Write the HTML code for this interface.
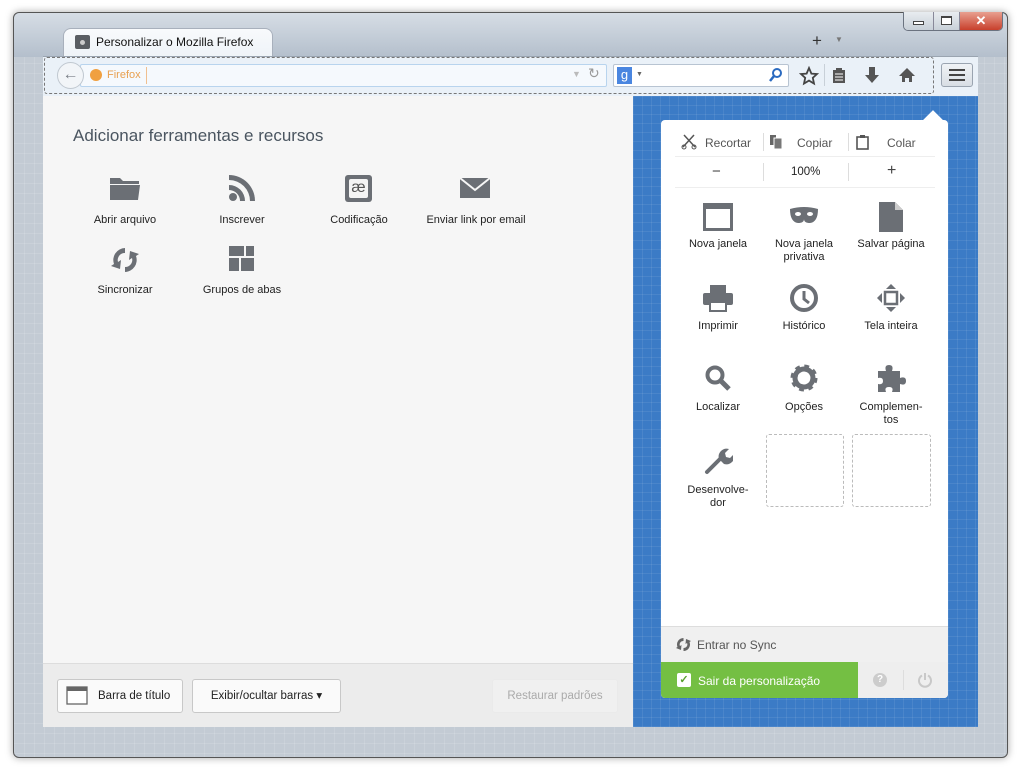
<!DOCTYPE html>
<html><head><meta charset="utf-8"><style>
*{box-sizing:border-box;margin:0;padding:0}
body{width:1024px;height:768px;background:#fff;position:relative;overflow:hidden;font-family:"Liberation Sans",sans-serif;font-size:11px;color:#222}
.a{position:absolute}
.frame{left:13px;top:12px;width:995px;height:746px;border:1px solid #555;border-radius:6px;background:#c3cbd4;box-shadow:0 0 8px rgba(0,0,0,.35);
background-image:linear-gradient(rgba(255,255,255,.12) 1px,transparent 1px),linear-gradient(90deg,rgba(255,255,255,.12) 1px,transparent 1px);background-size:10px 10px}
.top{left:14px;top:13px;width:993px;height:44px;background:linear-gradient(#d6dde5,#b4bfcc);border-radius:6px 6px 0 0}
.lbl{text-align:center;width:110px;font-size:11px;color:#222;line-height:13px}
.ic{fill:#6b6f75}
.blue{left:633px;top:96px;width:345px;height:631px;background:#3b7bc6;background-image:linear-gradient(rgba(255,255,255,.08) 1px,transparent 1px),linear-gradient(90deg,rgba(255,255,255,.08) 1px,transparent 1px);background-size:9px 9px}
.btn{background:#fafafa;border:1px solid #c8c8c8;border-radius:3px;height:34px;top:679px;font-size:11.5px;line-height:32px;text-align:center}
</style></head><body>
<div class="a frame"></div>
<div class="a top"></div>
<!-- window buttons -->
<div class="a" style="left:903px;top:12px;width:100px;height:19px;border:1px solid #6b7380;border-top:none;border-radius:0 0 5px 5px;overflow:hidden;display:flex">
<div style="width:30px;background:linear-gradient(#e8ecf0,#c8d0d8);border-right:1px solid #889"><div style="margin:9px auto 0;width:11px;height:4px;border:1px solid #444;background:#fff"></div></div>
<div style="width:26px;background:linear-gradient(#e8ecf0,#c8d0d8);border-right:1px solid #889"><div style="margin:4px auto 0;width:11px;height:9px;border:1px solid #444;border-top-width:2px;background:#fff"></div></div>
<div style="flex:1;background:linear-gradient(#e8a090,#c8402c);color:#fff;text-align:center;font-weight:bold;font-size:13px;line-height:18px">✕</div>
</div>
<!-- tab -->
<div class="a" style="left:63px;top:28px;width:210px;height:30px;background:linear-gradient(#f8fafc,#eef3f8);border:1px solid #a8b0bc;border-bottom:none;border-radius:8px 8px 0 0"></div>
<div class="a" style="left:75px;top:35px;width:15px;height:14px;background:#5a5e63;border-radius:2px"><div style="margin:5px auto 0;width:5px;height:5px;border-radius:50%;background:#ccc"></div></div>
<div class="a" style="left:96px;top:35px;font-size:12px;color:#111">Personalizar o Mozilla Firefox</div>
<div class="a" style="left:812px;top:31px;font-size:17px;color:#333">+</div>
<div class="a" style="left:835px;top:35px;font-size:8px;color:#777">▼</div>
<!-- toolbar -->
<div class="a" style="left:43px;top:56px;width:935px;height:40px;background:#eaf1f8;border-top:1px solid #9aa4b0"></div>
<div class="a" style="left:44px;top:57px;width:890px;height:37px;border:1px dashed #777;border-radius:3px"></div>
<div class="a" style="left:80px;top:64px;width:527px;height:23px;background:#f5f9fd;border:1px solid #b8d4ee;border-radius:2px"></div>
<div class="a" style="left:57px;top:62px;width:27px;height:27px;border-radius:50%;background:#f2f5f8;border:1px solid #c0c8d0;color:#7b8088;font-size:16px;text-align:center;line-height:24px;font-weight:bold">←</div>
<div class="a" style="left:90px;top:69px;width:12px;height:12px;border-radius:50%;background:#f0a040"></div>
<div class="a" style="left:107px;top:69px;color:#e8a050;font-size:11px">Firefox</div>
<div class="a" style="left:146px;top:67px;width:1px;height:17px;background:#f0c090"></div>
<div class="a" style="left:572px;top:69px;color:#bbb;font-size:9px">▼</div>
<div class="a" style="left:588px;top:65px;color:#999;font-size:14px">↻</div>
<div class="a" style="left:613px;top:64px;width:176px;height:23px;background:#fff;border:1px solid #b8c4d2;border-radius:2px"></div>
<div class="a" style="left:617px;top:67px;width:15px;height:17px;background:#4a86e0;color:#fff;text-align:center;font-size:13px;line-height:16px">g</div>
<div class="a" style="left:636px;top:71px;font-size:7px;color:#666">▼</div>
<svg class="a" style="left:768px;top:67px" width="16" height="16"><circle cx="9" cy="6" r="4" fill="none" stroke="#2a6ac0" stroke-width="2"/><line x1="6" y1="9" x2="2" y2="14" stroke="#2a6ac0" stroke-width="2.5"/></svg>
<svg class="a" style="left:799px;top:66px" width="20" height="20"><polygon points="10,2 12.4,7.6 18,8 13.8,11.8 15,17.6 10,14.6 5,17.6 6.2,11.8 2,8 7.6,7.6" fill="none" stroke="#444" stroke-width="1.8"/></svg>
<div class="a" style="left:824px;top:64px;width:1px;height:22px;background:#c8d0d8"></div>
<svg class="a" style="left:830px;top:66px" width="18" height="18"><rect x="3" y="4" width="12" height="13" fill="#555"/><rect x="6" y="2" width="6" height="3" fill="#555"/><g stroke="#fff"><line x1="5" y1="8" x2="13" y2="8"/><line x1="5" y1="11" x2="13" y2="11"/><line x1="5" y1="14" x2="13" y2="14"/></g></svg>
<svg class="a" style="left:863px;top:66px" width="18" height="18"><rect x="6" y="1" width="6" height="8" fill="#555"/><polygon points="2,9 16,9 9,17" fill="#555"/></svg>
<svg class="a" style="left:898px;top:66px" width="18" height="18"><polygon points="9,2 17,10 14,10 14,16 11,16 11,12 7,12 7,16 4,16 4,10 1,10" fill="#555"/></svg>
<div class="a" style="left:941px;top:63px;width:32px;height:24px;border:1px solid #9aa4b0;border-radius:3px;background:linear-gradient(#f0f3f6,#d8dee4)"><div style="margin:5px auto 0;width:16px;height:12px;border-top:2.5px solid #444;border-bottom:2.5px solid #444;position:relative"><div style="position:absolute;top:2.5px;left:0;width:16px;height:2.5px;background:#444"></div></div></div>
<!-- left content -->
<div class="a" style="left:43px;top:96px;width:590px;height:567px;background:#f6f6f6"></div>
<div class="a" style="left:43px;top:663px;width:590px;height:64px;background:#ececec;border-top:1px solid #ddd"></div>
<div class="a" style="left:73px;top:126px;font-size:17px;color:#4a5560">Adicionar ferramentas e recursos</div>
<svg class="a" style="left:108px;top:174px" width="34" height="28"><path d="M2 4h10l3 3h16v3H2z M2 11h30l-2 15H2z" class="ic"/></svg>
<div class="a lbl" style="left:70px;top:214px">Abrir arquivo</div>
<svg class="a" style="left:227px;top:173px" width="30" height="30"><circle cx="6" cy="24" r="4" class="ic"/><path d="M2 12a16 16 0 0 1 16 16h-5a11 11 0 0 0-11-11z M2 2a26 26 0 0 1 26 26h-5A21 21 0 0 0 2 7z" class="ic"/></svg>
<div class="a lbl" style="left:187px;top:214px">Inscrever</div>
<div class="a" style="left:345px;top:175px;width:27px;height:27px;background:#6b6f75;border-radius:3px"><div style="margin:4px;width:19px;height:19px;background:#f4f4f4;border-radius:2px;text-align:center;font-size:16px;line-height:17px;color:#555">æ</div></div>
<div class="a lbl" style="left:304px;top:214px">Codificação</div>
<svg class="a" style="left:459px;top:177px" width="32" height="22"><rect x="1" y="1" width="30" height="20" class="ic"/><path d="M1 1l15 12L31 1" stroke="#f6f6f6" stroke-width="2" fill="none"/></svg>
<div class="a lbl" style="left:420px;top:214px;width:112px">Enviar link por email</div>
<svg class="a" style="left:110px;top:245px" width="30" height="30"><path d="M15 3a12 12 0 0 0-11 16l-3 2 9 3 1-9-3 2a7 7 0 0 1 7-9z M15 27a12 12 0 0 0 11-16l3-2-9-3-1 9 3-2a7 7 0 0 1-7 9z" class="ic"/></svg>
<div class="a lbl" style="left:70px;top:284px">Sincronizar</div>
<svg class="a" style="left:229px;top:246px" width="26" height="26"><rect x="0" y="0" width="15" height="10" class="ic"/><rect x="17" y="0" width="8" height="10" class="ic"/><rect x="0" y="12" width="10" height="13" class="ic"/><rect x="12" y="12" width="13" height="13" class="ic"/></svg>
<div class="a lbl" style="left:187px;top:284px">Grupos de abas</div>
<!-- bottom buttons -->
<div class="a btn" style="left:57px;width:126px;padding-left:28px;text-align:left;padding-left:40px">Barra de título</div>
<svg class="a" style="left:66px;top:686px" width="22" height="19"><rect x="1" y="1" width="20" height="17" fill="#fff" stroke="#666" stroke-width="1.3"/><rect x="1" y="1" width="20" height="4" fill="#666"/></svg>
<div class="a btn" style="left:192px;width:149px">Exibir/ocultar barras ▾</div>
<div class="a btn" style="left:492px;width:126px;background:#f0f0f0;border-color:#eaeaea;color:#aaa">Restaurar padrões</div>
<!-- blue area -->
<div class="a blue"></div>
<div class="a" style="left:661px;top:120px;width:287px;height:578px;background:#fff;border-radius:4px"></div>
<div class="a" style="left:926px;top:113px;width:14px;height:14px;background:#fff;transform:rotate(45deg)"></div>
<!-- edit row -->
<svg class="a" style="left:681px;top:134px" width="16" height="16"><path d="M3 1l11 12M13 1L2 13" stroke="#555" stroke-width="1.5"/><circle cx="3" cy="13" r="2" fill="none" stroke="#555"/><circle cx="13" cy="13" r="2" fill="none" stroke="#555"/></svg>
<div class="a" style="left:705px;top:136px;color:#555;font-size:12px">Recortar</div>
<div class="a" style="left:763px;top:133px;width:1px;height:18px;background:#ddd"></div>
<svg class="a" style="left:769px;top:134px" width="16" height="16"><rect x="1" y="1" width="6" height="10" fill="#666"/><rect x="5" y="4" width="8" height="11" fill="#777" stroke="#fff"/></svg>
<div class="a" style="left:797px;top:136px;color:#555;font-size:12px">Copiar</div>
<div class="a" style="left:848px;top:133px;width:1px;height:18px;background:#ddd"></div>
<svg class="a" style="left:856px;top:134px" width="14" height="16"><rect x="1" y="3" width="11" height="12" fill="none" stroke="#555" stroke-width="1.6"/><rect x="4" y="1" width="5" height="3" fill="#555"/></svg>
<div class="a" style="left:887px;top:136px;color:#555;font-size:12px">Colar</div>
<div class="a" style="left:675px;top:156px;width:260px;height:1px;background:#eee"></div>
<div class="a" style="left:712px;top:163px;font-size:15px;color:#444">−</div>
<div class="a" style="left:763px;top:163px;width:1px;height:18px;background:#ddd"></div>
<div class="a" style="left:791px;top:166px;font-size:11.5px;color:#222">100%</div>
<div class="a" style="left:848px;top:163px;width:1px;height:18px;background:#ddd"></div>
<div class="a" style="left:887px;top:162px;font-size:16px;color:#444">+</div>
<div class="a" style="left:675px;top:187px;width:260px;height:1px;background:#eee"></div>
<!-- grid -->
<svg class="a" style="left:703px;top:203px" width="30" height="28"><rect x="1.5" y="1.5" width="27" height="25" fill="none" stroke="#6b6f75" stroke-width="3"/><rect x="1" y="1" width="28" height="5" class="ic"/></svg>
<div class="a lbl" style="left:663px;top:238px">Nova janela</div>
<svg class="a" style="left:789px;top:207px" width="30" height="18"><path d="M1 2q14-4 28 0q0 13-8 14q-6 0-6-4q0 4-6 4q-8-1-8-14z" class="ic"/><ellipse cx="9" cy="7" rx="3" ry="2" fill="#fff"/><ellipse cx="21" cy="7" rx="3" ry="2" fill="#fff"/></svg>
<div class="a lbl" style="left:749px;top:238px">Nova janela<br>privativa</div>
<svg class="a" style="left:879px;top:202px" width="24" height="30"><path d="M0 0h16l8 8v22H0z" class="ic"/><path d="M16 0v8h8" fill="#ccc"/></svg>
<div class="a lbl" style="left:836px;top:238px">Salvar página</div>
<svg class="a" style="left:702px;top:284px" width="32" height="28"><rect x="8" y="1" width="16" height="8" class="ic"/><rect x="1" y="9" width="30" height="12" rx="2" class="ic"/><rect x="8" y="18" width="16" height="9" fill="#fff" stroke="#6b6f75" stroke-width="2"/></svg>
<div class="a lbl" style="left:663px;top:320px">Imprimir</div>
<svg class="a" style="left:789px;top:283px" width="30" height="30"><circle cx="15" cy="15" r="12" fill="none" stroke="#6b6f75" stroke-width="4"/><path d="M15 8v8l5 4" stroke="#6b6f75" stroke-width="3" fill="none"/></svg>
<div class="a lbl" style="left:749px;top:320px">Histórico</div>
<svg class="a" style="left:877px;top:284px" width="28" height="28"><polygon points="14,0 19,5 9,5" class="ic"/><polygon points="14,28 19,23 9,23" class="ic"/><polygon points="0,14 5,9 5,19" class="ic"/><polygon points="28,14 23,9 23,19" class="ic"/><rect x="8" y="8" width="12" height="12" fill="none" stroke="#6b6f75" stroke-width="2.5"/></svg>
<div class="a lbl" style="left:836px;top:320px">Tela inteira</div>
<svg class="a" style="left:704px;top:364px" width="28" height="28"><circle cx="11" cy="11" r="7.5" fill="none" stroke="#6b6f75" stroke-width="4"/><line x1="16" y1="16" x2="25" y2="25" stroke="#6b6f75" stroke-width="5"/></svg>
<div class="a lbl" style="left:663px;top:401px">Localizar</div>
<svg class="a" style="left:790px;top:364px" width="28" height="28"><circle cx="14" cy="14" r="10" fill="none" stroke="#6b6f75" stroke-width="7" stroke-dasharray="4 3.85"/><circle cx="14" cy="14" r="9" fill="none" stroke="#6b6f75" stroke-width="5"/></svg>
<div class="a lbl" style="left:749px;top:401px">Opções</div>
<svg class="a" style="left:876px;top:363px" width="30" height="30"><path d="M2 8h8q-2-6 3-6t3 6h8v7q6-2 6 3t-6 3v8h-8q2-5-3-5t-3 5H2v-8q5 1 5-3t-5-3z" class="ic"/></svg>
<div class="a lbl" style="left:836px;top:401px">Complemen-<br>tos</div>
<svg class="a" style="left:703px;top:446px" width="30" height="30"><path d="M4 26l14-14" stroke="#6b6f75" stroke-width="4" stroke-linecap="round"/><path d="M16 13a8 8 0 0 1 10-10l-4 4 1 4 4 1 4-4a8 8 0 0 1-10 10z" class="ic"/></svg>
<div class="a lbl" style="left:663px;top:484px">Desenvolve-<br>dor</div>
<div class="a" style="left:766px;top:434px;width:78px;height:73px;border:1px dashed #bbb;border-radius:3px"></div>
<div class="a" style="left:852px;top:434px;width:79px;height:73px;border:1px dashed #bbb;border-radius:3px"></div>
<!-- footer -->
<div class="a" style="left:661px;top:626px;width:287px;height:36px;background:#f0f0f0;border-top:1px solid #ddd"></div>
<svg class="a" style="left:676px;top:637px" width="15" height="15"><path d="M7.5 1a6.5 6.5 0 0 0-6 9l-1.5 1 5 2 .5-5-1.5 1a3.5 3.5 0 0 1 3.5-5z M7.5 14a6.5 6.5 0 0 0 6-9l1.5-1-5-2-.5 5 1.5-1a3.5 3.5 0 0 1-3.5 5z" fill="#666"/></svg>
<div class="a" style="left:697px;top:638px;font-size:12px;color:#555">Entrar no Sync</div>
<div class="a" style="left:661px;top:662px;width:287px;height:36px;background:#eeeeee;border-radius:0 0 4px 4px"></div>
<div class="a" style="left:661px;top:662px;width:197px;height:36px;background:#74bf43;border-radius:0 0 0 4px"></div>
<div class="a" style="left:677px;top:673px;width:14px;height:14px;background:#fff;border-radius:2px;color:#5aa030;font-size:11px;text-align:center;line-height:14px;font-weight:bold">✓</div>
<div class="a" style="left:698px;top:674px;font-size:12px;color:#fff">Sair da personalização</div>
<div class="a" style="left:873px;top:673px;width:14px;height:14px;border-radius:50%;background:#ccc;color:#fff;font-size:10px;text-align:center;line-height:14px;font-weight:bold">?</div>
<div class="a" style="left:903px;top:670px;width:1px;height:20px;background:#ddd"></div>
<svg class="a" style="left:917px;top:672px" width="16" height="16"><path d="M5 3.5a6 6 0 1 0 6 0" fill="none" stroke="#c8c8c8" stroke-width="2"/><line x1="8" y1="1" x2="8" y2="8" stroke="#c8c8c8" stroke-width="2"/></svg>
</body></html>
